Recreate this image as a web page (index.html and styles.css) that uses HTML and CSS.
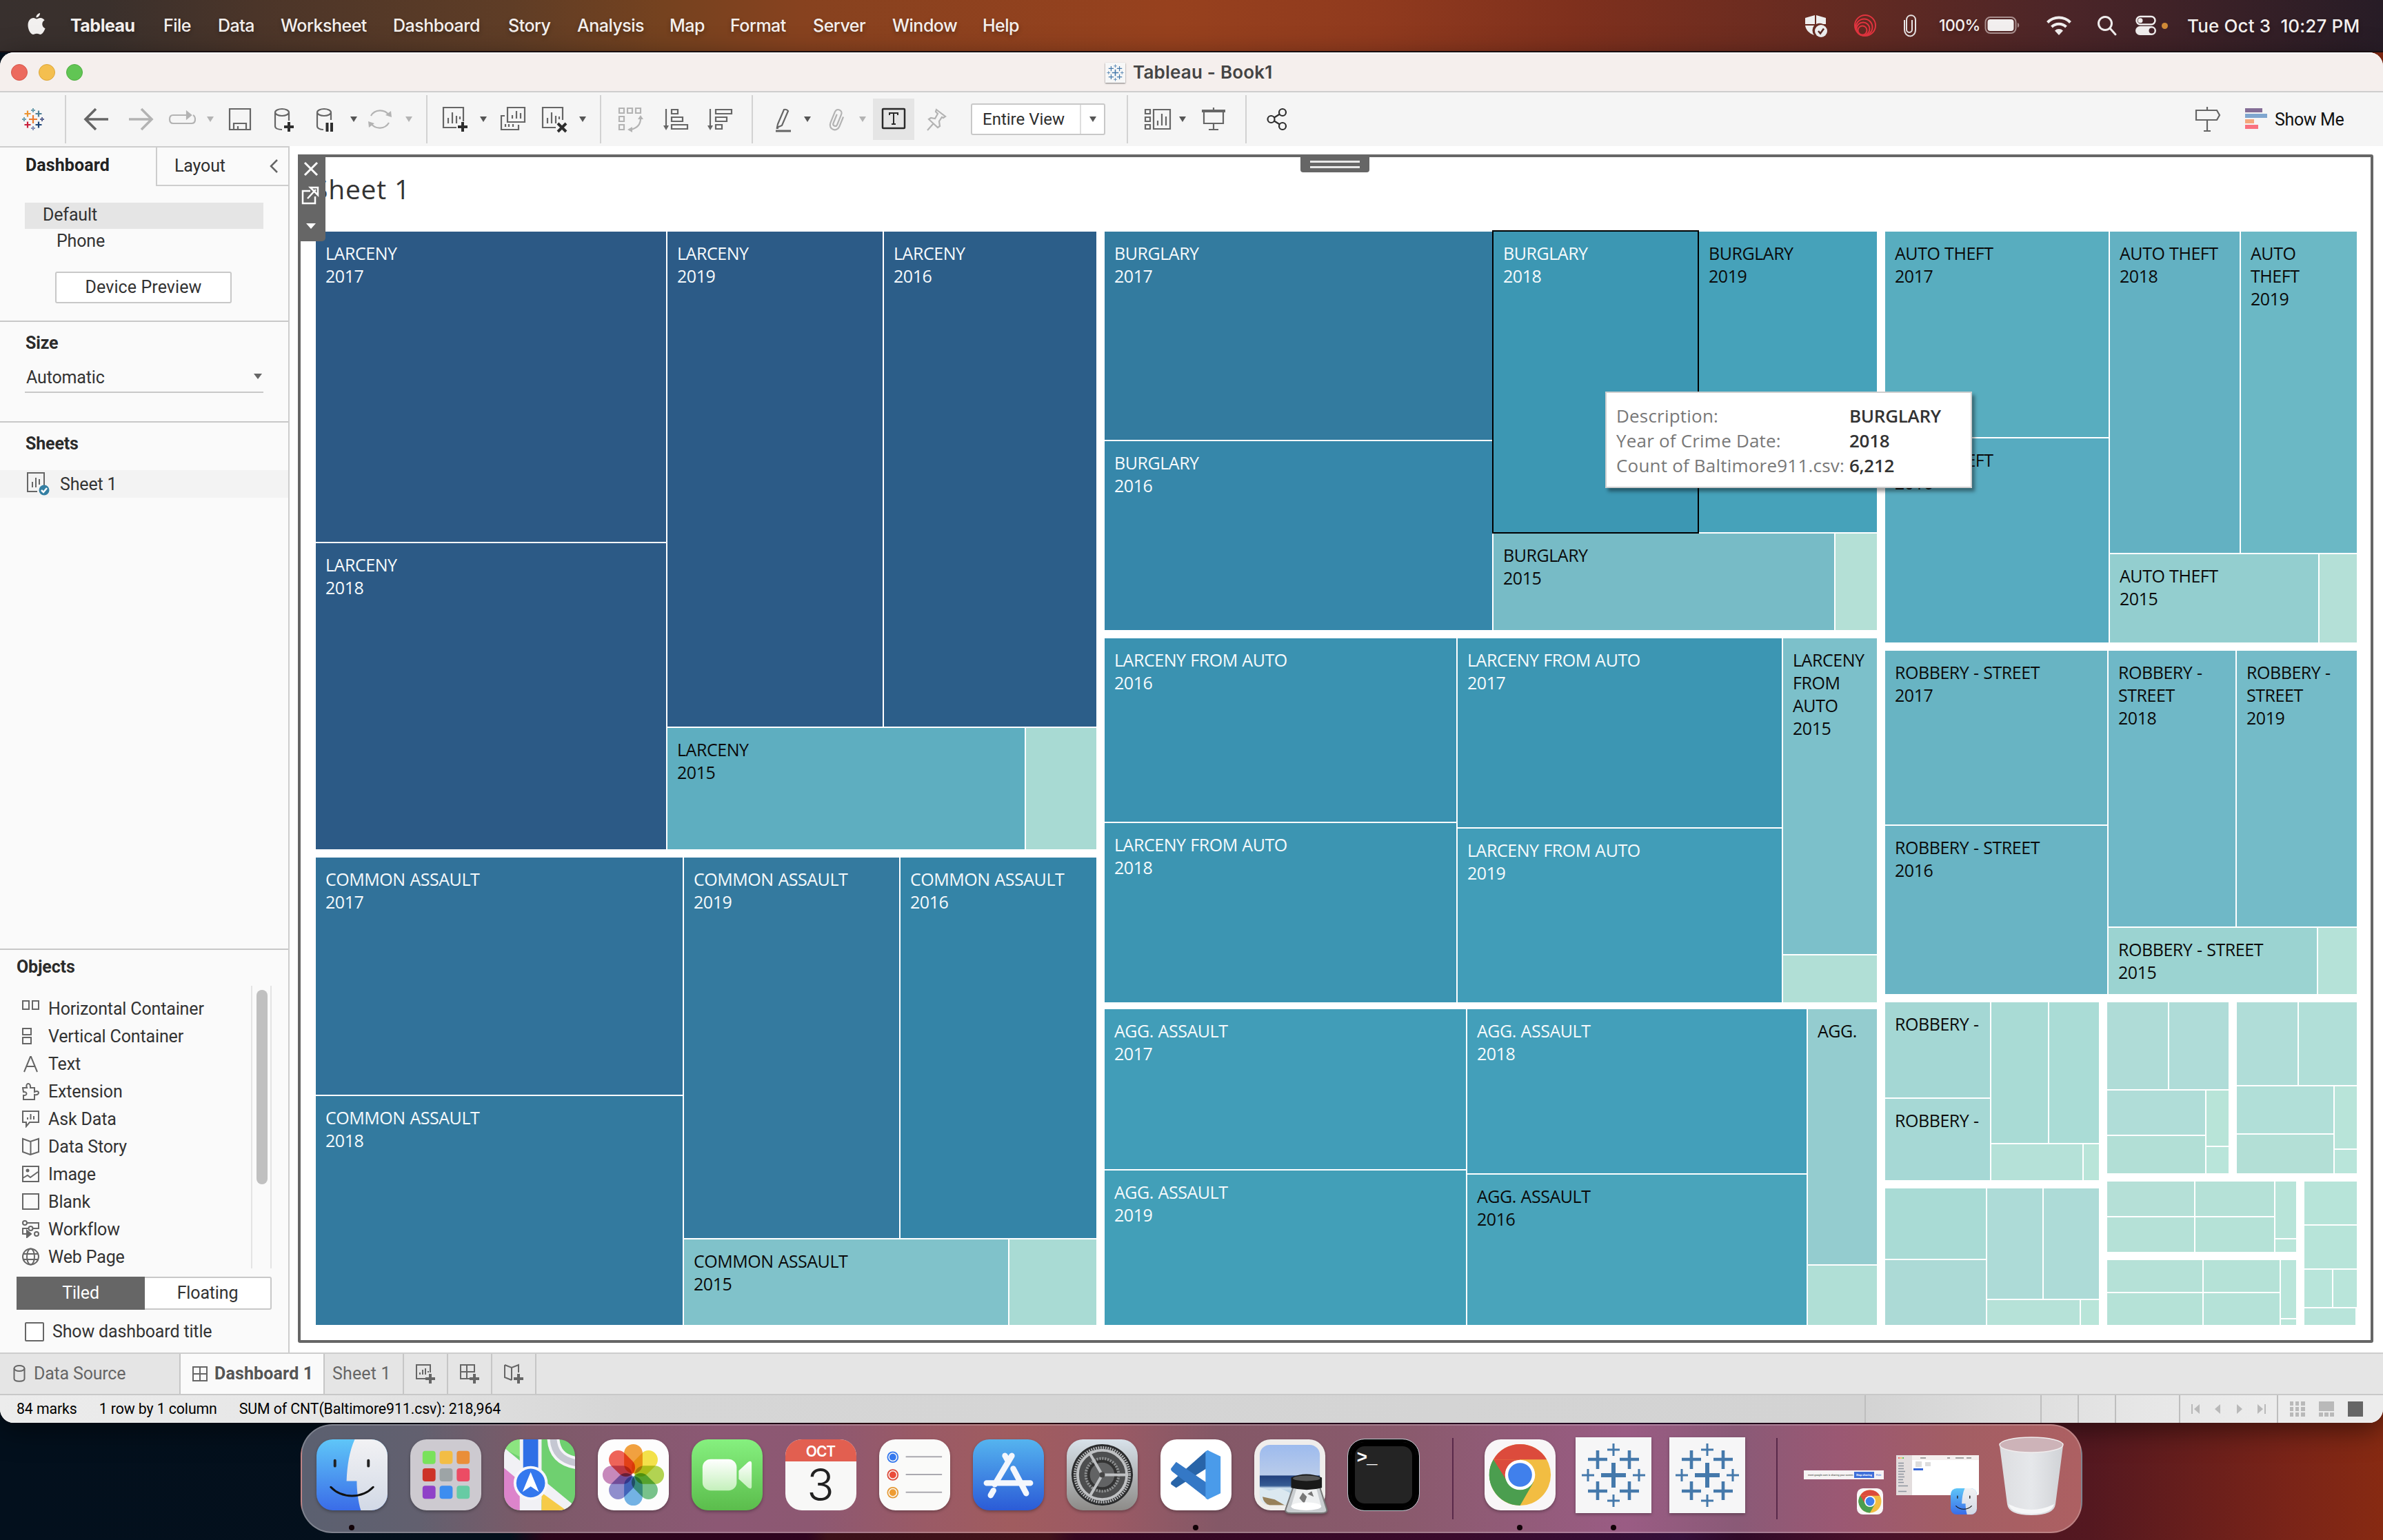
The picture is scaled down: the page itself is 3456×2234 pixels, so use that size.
FILE: index.html
```html
<!DOCTYPE html>
<html lang="en">
<head>
<meta charset="utf-8">
<title>Tableau - Book1</title>
<link rel="stylesheet" href="styles.css">
</head>
<body>
<svg class="defs" width="0" height="0">
  <defs>
    <linearGradient id="g-blue" x1="0" y1="0" x2="0" y2="1"><stop offset="0" stop-color="#55b4ef"/><stop offset="1" stop-color="#2b5bd7"/></linearGradient>
    <linearGradient id="g-face" x1="0" y1="0" x2="0" y2="1"><stop offset="0" stop-color="#5fc6f8"/><stop offset="1" stop-color="#3a6ce8"/></linearGradient>
    <linearGradient id="g-pale" x1="0" y1="0" x2="0" y2="1"><stop offset="0" stop-color="#f2f2f4"/><stop offset="1" stop-color="#d2d9e6"/></linearGradient>
    <linearGradient id="g-green" x1="0" y1="0" x2="0" y2="1"><stop offset="0" stop-color="#86f07f"/><stop offset="1" stop-color="#5bbd4c"/></linearGradient>
    <linearGradient id="g-cam" x1="0" y1="0" x2="0" y2="1"><stop offset="0" stop-color="#ffffff"/><stop offset="1" stop-color="#c4f0bb"/></linearGradient>
    <linearGradient id="g-gray" x1="0" y1="0" x2="0" y2="1"><stop offset="0" stop-color="#d8e2ea"/><stop offset="1" stop-color="#8d8b88"/></linearGradient>
    <linearGradient id="g-sky" x1="0" y1="0" x2="0" y2="1"><stop offset="0" stop-color="#9dbbee"/><stop offset=".5" stop-color="#b9cbea"/><stop offset=".52" stop-color="#23417e"/><stop offset=".68" stop-color="#355b93"/><stop offset=".72" stop-color="#cfe0ee"/><stop offset=".86" stop-color="#8fb7cf"/><stop offset="1" stop-color="#a88a5c"/></linearGradient>
    <linearGradient id="g-trash" x1="0" y1="0" x2="1" y2="0"><stop offset="0" stop-color="#dcdde0"/><stop offset=".5" stop-color="#e6e8eb"/><stop offset="1" stop-color="#d0d2d6"/></linearGradient>
    <clipPath id="tileclip"><rect width="104" height="104" rx="24"/></clipPath>
    <symbol id="caret" viewBox="0 0 12 10"><path d="M1 1h10L6 9z" fill="currentColor"/></symbol>
    <symbol id="finder" viewBox="0 0 104 104">
      <g clip-path="url(#tileclip)">
        <rect width="104" height="104" fill="url(#g-face)"/>
        <path d="M56 0C48 18 45 38 44 61h15c0 14 2 30 6 43h39V0z" fill="url(#g-pale)"/>
      </g>
      <path d="M27 31v8M76 31v8" stroke="#222" stroke-width="4" stroke-linecap="round"/>
      <path d="M21 70c16 17 46 17 62 0" fill="none" stroke="#111" stroke-width="3" stroke-linecap="round"/>
    </symbol>
    <symbol id="chrome" viewBox="0 0 104 104">
      <rect width="104" height="104" rx="24" fill="#f8f6f7"/>
      <circle cx="52" cy="52" r="45" fill="#f2bd42"/>
      <path d="M13 29.500A45 45 0 0 1 91 29.500H52z" fill="#dc4b3c"/>
      <path d="M13 29.500A45 45 0 0 0 52 97L71.500 63 52 52 32 63z" fill="#4b9e4f"/>
      <path d="M13 29.500 32 63 52 52V29.500H20z" fill="#dc4b3c"/>
      <path d="M13 29.500A45 45 0 0 0 10 68l24-5z" fill="#4b9e4f"/>
      <circle cx="52" cy="52" r="22" fill="#fff"/><circle cx="52" cy="52" r="17.500" fill="#4080ec"/>
    </symbol>
    <symbol id="tableau" viewBox="0 0 110 110">
      <g stroke="#4579ab" fill="none">
        <path d="M55 37v36M37 55h36" stroke-width="6"/>
        <path d="M32 19v27M18 32h28M78 19v27M64 32h28M32 64v27M18 78h28M78 64v27M64 78h28" stroke-width="4.600"/>
        <path d="M55 9v18M46 18h18M55 83v18M46 92h18M18 46v18M9 55h18M92 46v18M83 55h18" stroke-width="3"/>
      </g>
    </symbol>
  </defs>
</svg>

<header class="menubar">
  <nav class="menus">
    <svg class="apple" viewBox="0 0 28 34"><path d="M19 1c.3 3-2.500 6.500-5.500 6.500C13 4.500 16 1.500 19 1zM14 9.500c1.500 0 3-1.500 5.600-1.500 2.600 0 4.700 1.400 6 3.300-5 3-4 10 1 12C25 27 22.500 32 19.600 32c-2 0-2.700-1.200-5.200-1.200S11 32 9.200 32C5.500 32 1.500 25 1.500 18.500S5.500 8 9.500 8c2 0 3.400 1.500 4.500 1.500z" fill="#f2f0ef"/></svg>
    <b>Tableau</b><span>File</span><span>Data</span><span>Worksheet</span><span>Dashboard</span><span>Story</span><span>Analysis</span><span>Map</span><span>Format</span><span>Server</span><span>Window</span><span>Help</span>
  </nav>
  <div class="extras">
    <svg class="ic" viewBox="0 0 40 40"><path d="M19 5 5 9v9h14zM21 5l14 4v9h-4a11 11 0 0 0-10 0zM5 20h13a11 11 0 0 0 0 14C10 31 6 26 5 20z" fill="#eee"/><circle cx="28" cy="28" r="9" fill="#eee"/><path d="m24 28 3 3.500 5-7" fill="none" stroke="#5a2822" stroke-width="2.500"/></svg>
    <svg class="ic" viewBox="0 0 40 40" fill="none" stroke="#e2343f" stroke-width="2"><circle cx="20" cy="20" r="15"/><circle cx="18.500" cy="22.500" r="12"/><circle cx="17" cy="25" r="9.500"/><circle cx="16" cy="27" r="6.500"/></svg>
    <svg class="ic" viewBox="0 0 40 40" fill="none" stroke="#e8e4e4" stroke-width="2"><path d="M24 12v14a4 4 0 0 1-8 0V12c0-9 13-9 13 0v14c0 13-16 12-16 0V12" transform="translate(-1)"/></svg>
    <span class="pct">100%</span>
    <svg class="batt" viewBox="0 0 52 28"><rect x="1.500" y="2" width="44" height="23" rx="7" fill="none" stroke="#a98f8e" stroke-width="2"/><rect x="4.500" y="5" width="38" height="17" rx="4" fill="#f2efef"/><path d="M48 10c3 1 3 6 0 7z" fill="#a98f8e"/></svg>
    <svg class="ic" viewBox="0 0 40 40" fill="none" stroke="#f0eded" stroke-width="4"><path d="M3.500 15.500a23 23 0 0 1 33 0M9.500 22a15 15 0 0 1 21 0"/><path d="M20 34l-6-6.500a8.500 8.500 0 0 1 12 0z" fill="#f0eded" stroke="none"/></svg>
    <svg class="ic" viewBox="0 0 40 40" fill="none" stroke="#f0eded" stroke-width="3"><circle cx="18" cy="17" r="9.500"/><path d="m25 24 8 9" stroke-linecap="round"/></svg>
    <svg class="ic" viewBox="0 0 40 40"><rect x="6.500" y="7" width="27" height="11.500" rx="5.700" fill="none" stroke="#f0eded" stroke-width="2.500"/><circle cx="12" cy="12.700" r="3.500" fill="#f0eded"/><rect x="5" y="21" width="30" height="13" rx="6.500" fill="#f0eded"/><circle cx="28.500" cy="27.500" r="4" fill="#44232a"/></svg>
    <i class="recdot"></i>
    <span class="clock">Tue Oct 3&nbsp; 10:27 PM</span>
  </div>
</header>

<main class="window">
  <div class="titlebar">
    <div class="lights"><i class="red"></i><i class="yellow"></i><i class="green"></i></div>
    <div class="title"><svg class="doc" viewBox="0 0 110 110"><use href="#tableau"/></svg>Tableau - Book1</div>
  </div>

  <div class="toolbar">
    <svg class="ic" viewBox="0 0 40 40" fill="none" stroke-width="2.500"><path d="M20 14v12M14 20h12" stroke="#eb7a2e"/><path d="M12 7.500v9M7.500 12h9" stroke="#ec9330"/><path d="M28 7.500v9M23.500 12h9" stroke="#4c7f95"/><path d="M12 23.500v9M7.500 28h9" stroke="#c9203b"/><path d="M28 23.500v9M23.500 28h9" stroke="#1e4477"/><path d="M20 4v6M17 7h6" stroke="#6fa0b0" stroke-width="2"/><path d="M20 30v6M17 33h6" stroke="#8590b8" stroke-width="2"/><path d="M7 17v6M4 20h6" stroke="#6fa0b0" stroke-width="2"/><path d="M33 17v6M30 20h6" stroke="#5b6591" stroke-width="2"/></svg>
    <i class="sep"></i>
    <svg class="ic" viewBox="0 0 40 40" fill="none" stroke-width="3"><path d="M37 20H5M19 5 4 20l15 15"/></svg>
    <svg class="ic dim" viewBox="0 0 40 40" fill="none" stroke-width="3"><path d="M3 20h32M21 5l15 15-15 15"/></svg>
    <svg class="ic dim" viewBox="0 0 40 40" fill="none"><path d="M26 14H7q-5 0-5 6t5 6h27q5 0 5-6c0-4-1-5-3-6"/><path d="m27 9 6 5-6 5z" fill="currentColor"/></svg>
    <svg class="caret dim"><use href="#caret"/></svg>
    <svg class="ic" viewBox="0 0 40 40" fill="none"><path d="M5 5h30v30H5zM11 35V26h18v9M17 35v-5"/></svg>
    <svg class="ic" viewBox="0 0 40 40" fill="none"><ellipse cx="17" cy="10" rx="10" ry="5"/><path d="M7 10v20c0 3 4 5 10 5M27 10v12"/><path d="M27 24v14M20 31h14" class="bold"/></svg>
    <svg class="ic" viewBox="0 0 40 40" fill="none"><ellipse cx="18" cy="10" rx="10" ry="5"/><path d="M8 10v20c0 3 4 5 9 5M28 10v11"/><path d="M22.500 25v13M29 25v13" class="bold"/></svg>
    <svg class="caret"><use href="#caret"/></svg>
    <svg class="ic dim" viewBox="0 0 40 40" fill="none"><path d="M7 15A15 14 0 0 1 33 14M33 25A15 14 0 0 1 7 26"/><path d="m28 14 9 3-1-9zM12 26l-9-3 1 9z" fill="currentColor" stroke="none"/></svg>
    <svg class="caret dim"><use href="#caret"/></svg>
    <i class="sep"></i>
    <svg class="ic" viewBox="0 0 40 40" fill="none"><path d="M22 32H3V3h29v20M10 26v-8M16 26V10M22 26V15M27 20v-4"/><path d="M31 24v14M24 31h14" class="bold"/></svg>
    <svg class="caret"><use href="#caret"/></svg>
    <svg class="ic" viewBox="0 0 40 40" fill="none"><path d="M12 3h25v21H12zM19 19v-5M25 19V8M31 19v-8M8 15H3v20h25v-7M9 31v-4M14 31v-4M20 31v-4"/></svg>
    <svg class="ic" viewBox="0 0 40 40" fill="none"><path d="M22 32H3V3h29v18M10 26v-8M16 26V10M22 26V15M27 20v-4"/><path d="m25 26 12 12M37 26 25 38" class="bold"/></svg>
    <svg class="caret"><use href="#caret"/></svg>
    <i class="sep"></i>
    <svg class="ic dim" viewBox="0 0 40 40" fill="none"><path d="M3 4h7v7H3zM15 4h7v7h-7zM27 4h7v7h-7zM3 16h7v7H3zM3 28h7v7H3zM34 19c0 9-6 14-14 16"/><path d="m30 20 4-6 4 6zM22 31l-7 4 7 4z" fill="currentColor" stroke="none"/></svg>
    <svg class="ic" viewBox="0 0 40 40" fill="none"><path d="M6 5v26M14 6h9v6h-9zM14 17h16v6H14zM14 28h23v6H14z"/><path d="m2 29 4 7 4-7z" fill="currentColor" stroke="none"/></svg>
    <svg class="ic" viewBox="0 0 40 40" fill="none"><path d="M6 5v26M14 6h23v6H14zM14 17h16v6H14zM14 28h9v6h-9z"/><path d="m2 29 4 7 4-7z" fill="currentColor" stroke="none"/></svg>
    <i class="sep"></i>
    <svg class="ic" viewBox="0 0 40 40" fill="none"><path d="m12 27 9-21q4-1 6 2l-9 21-7 3zM10 33h3"/><path d="M9 37h22" stroke-width="3"/></svg>
    <svg class="caret"><use href="#caret"/></svg>
    <svg class="ic dim" viewBox="0 0 40 40" fill="none"><path d="M18 13v14a3 3 0 0 0 6 0V11c0-7-10-7-10 0v17c0 10 14 10 14 0V13" transform="rotate(22 20 20)"/></svg>
    <svg class="caret dim"><use href="#caret"/></svg>
    <span class="tbtn"><svg viewBox="0 0 40 40" fill="none" stroke="#2a2a2a" stroke-width="2.500"><rect x="4" y="5" width="32" height="28" rx="1"/><path d="M14 14v-3h12v3M20 11v16M17 27h6" stroke-width="2"/></svg></span>
    <svg class="ic dim" viewBox="0 0 40 40" fill="none"><path d="m19 6 13 10-3 2-2-1-4 6 1 7-3 2L8 20l3-2 6 1 4-7-3-3zM14 27l-8 9"/></svg>
    <span class="select"><span>Entire View</span><i><svg class="caret"><use href="#caret"/></svg></i></span>
    <i class="sep"></i>
    <svg class="ic" viewBox="0 0 40 40" fill="none"><path d="M2 6h7v6H2zM2 17h7v6H2zM2 28h7v6H2zM14 6h24v28H14zM20 29v-7M26 29V12M32 29V16"/></svg>
    <svg class="caret"><use href="#caret"/></svg>
    <svg class="ic" viewBox="0 0 40 40" fill="none"><path d="M20 3v3M6 8v18h28V8M20 26v9M13 35h14"/><path d="M3 8h34" stroke-width="4"/></svg>
    <i class="sep"></i>
    <svg class="ic ink" viewBox="0 0 40 40" fill="none"><circle cx="11.500" cy="20" r="5"/><circle cx="28" cy="10" r="5"/><circle cx="28" cy="30" r="5"/><path d="m16 17.500 8-5M16 22.500l8 5"/></svg>
    <svg class="ic" viewBox="0 0 40 40" fill="none"><path d="M19 2v4M3 7h30l4 7-4 7H3zM19 21v15M14 37h10"/></svg>
    <span class="showme"><svg viewBox="0 0 34 32"><path d="M0 0h25v6H0z" fill="#846d96"/><path d="M0 8h32v6H0z" fill="#7fa6cf"/><path d="M0 16h13v6H0z" fill="#f5a77c"/><path d="M0 24h19v6H0z" fill="#f9717f"/></svg>Show Me</span>
  </div>

  <div class="work">
    <aside class="side">
      <div class="tabs">
        <b>Dashboard</b>
        <span>Layout<svg viewBox="0 0 14 22"><path d="M12 2 3 11l9 9" fill="none" stroke="#666" stroke-width="2.500"/></svg></span>
      </div>
      <div class="devices">
        <div class="dev on">Default</div>
        <div class="dev phone">Phone</div>
        <div class="preview">Device Preview</div>
      </div>
      <section class="size">
        <h2>Size</h2>
        <div class="auto">Automatic<svg viewBox="0 0 12 10"><path d="M0 0h12L6 8z" fill="#666"/></svg></div>
      </section>
      <section class="sheets">
        <h2>Sheets</h2>
        <div class="sheetrow">
          <svg viewBox="0 0 34 34"><path d="M15 28H1V1h24v18M8 22v-8M13 22V8M18 18v-8" fill="none" stroke="#666" stroke-width="2"/><circle cx="25" cy="26" r="7.500" fill="#347fa3"/><path d="m21 26 3 3 5-6" fill="none" stroke="#fff" stroke-width="2.500"/></svg>
          Sheet 1
        </div>
      </section>
      <section class="objects">
        <h2>Objects</h2>
        <div class="objwrap">
          <ul>
            <li><svg viewBox="0 0 26 26"><path d="M1 2h9v12H1zM15 2h9v12h-9z"/></svg>Horizontal Container</li>
            <li><svg viewBox="0 0 26 26"><path d="M1 2h12v9H1zM1 15h12v9H1z"/></svg>Vertical Container</li>
            <li><svg viewBox="0 0 26 26"><path d="m3 25 9-22h1l9 22M6 17h13"/></svg>Text</li>
            <li><svg viewBox="0 0 26 26"><path d="M1 8h6C4 1 13-1 12 8h6v6c8-4 8 6 0 4v7H2v-6c6 1 6-6 0-5z"/></svg>Extension</li>
            <li><svg viewBox="0 0 26 26"><path d="M1 2h23v16H11l-5 6v-6H1zM8 14v-3M12.500 14V6M17 14V9"/></svg>Ask Data</li>
            <li><svg viewBox="0 0 26 26"><path d="m1 2 11 4 12-4v19l-12 4-11-4zM12.500 6v18"/></svg>Data Story</li>
            <li><svg viewBox="0 0 26 26"><path d="M1 2h23v22H1zM1 19l7-4 4 3 11-8"/><circle cx="8" cy="8" r="1.500" fill="#666"/></svg>Image</li>
            <li><svg viewBox="0 0 26 26"><path d="M1 2h23v22H1z"/></svg>Blank</li>
            <li><svg viewBox="0 0 26 26"><circle cx="4" cy="4" r="3"/><circle cx="12.500" cy="12" r="3"/><circle cx="21" cy="20" r="3"/><path d="M7 4h17v8h-8M9 12H1v8h8"/><path d="m7 15 6 5-6 5z" fill="#666"/></svg>Workflow</li>
            <li><svg viewBox="0 0 26 26"><circle cx="12.500" cy="13" r="11.500"/><ellipse cx="12.500" cy="13" rx="5.500" ry="11.500"/><path d="M2 9h21M2 17h21"/></svg>Web Page</li>
          </ul>
          <div class="track"><i></i></div>
        </div>
        <div class="toggle"><span class="on">Tiled</span><span>Floating</span></div>
        <div class="check"><i></i>Show dashboard title</div>
      </section>
    </aside>

    <div class="canvas">
      <div class="frame">
        <div class="sheet-title">Sheet 1</div>
        <div class="treemap" id="treemap"></div>
        <div class="objbar">
          <svg viewBox="0 0 40 126" fill="none" stroke="#fff" stroke-width="3"><path d="m10 12 18 18M28 12 10 30"/><path d="M18 53H7v18h18V61" stroke-width="2.500"/><path d="m14 64 12-13M18 48h11v11z" stroke-width="2.500"/><path d="M12 100h14l-7 8z" fill="#fff" stroke="none"/></svg>
        </div>
        <div class="grip"><i></i><i></i></div>
        <div class="tooltip">
          <span>Description:</span><b>BURGLARY</b>
          <span>Year of Crime Date:</span><b>2018</b>
          <span>Count of Baltimore911.csv:</span><b>6,212</b>
        </div>
      </div>
    </div>
  </div>

  <div class="sheettabs">
    <span class="source"><svg viewBox="0 0 18 26"><ellipse cx="9" cy="5" rx="7.500" ry="4"/><path d="M1.500 5v15c0 5 15 5 15 0V5"/></svg>Data Source</span>
    <span class="active"><svg viewBox="0 0 24 24"><path d="M2 2h20v20H2zM12 2v20M2 12h20"/></svg>Dashboard 1</span>
    <span class="plain">Sheet 1</span>
    <span class="add"><svg viewBox="0 0 30 30"><path d="M15 22H2V2h20v11M7 16v-3M11 16V9M15 16V7M19 13v-2"/><path d="M22 15v14M15 22h14" stroke-width="4"/></svg></span>
    <span class="add"><svg viewBox="0 0 30 30"><path d="M15 22H2V2h20v11M11 2v20M2 12h20"/><path d="M22 15v14M15 22h14" stroke-width="4"/></svg></span>
    <span class="add"><svg viewBox="0 0 30 30"><path d="m2 2 10 4 10-4v11M2 2v18l10 4M12 6v18"/><path d="M22 15v14M15 22h14" stroke-width="4"/></svg></span>
  </div>

  <div class="status">
    <span>84 marks</span><span>1 row by 1 column</span><span>SUM of CNT(Baltimore911.csv): 218,964</span>
    <div class="cells">
      <i></i><i></i><i></i><i></i>
      <div class="nav">
        <svg viewBox="0 0 112 16" fill="#b9b9b9"><path d="M0 1h2v14H0zM12 1v14L4 8zM42 1v14l-8-7zM66 1v14l8-7zM96 1v14l8-7zM106 1h2v14h-2z"/></svg>
      </div>
      <div class="views">
        <svg viewBox="0 0 108 24"><path d="M0 1h5v6H0zM8 1h5v6H8zM16 1h6v6h-6zM0 9h5v6H0zM8 9h5v6H8zM16 9h6v6h-6zM0 17h5v6H0zM8 17h5v6H8zM16 17h6v6h-6zM42 1h22v14H42zM42 17h6v6h-6zM50 17h6v6h-6zM58 17h6v6h-6z" fill="#b9b9b9"/><path d="M84 1h22v22H84z" fill="#666"/></svg>
      </div>
    </div>
  </div>
</main>

<footer class="dock">
  <div class="app run"><svg class="app-ic" viewBox="0 0 104 104"><use href="#finder"/></svg></div>
  <div class="app"><svg class="app-ic" viewBox="0 0 104 104"><rect width="104" height="104" rx="24" fill="#cdcad0"/><rect x="18" y="17" width="19" height="19" rx="4" fill="#79e25b"/><rect x="43" y="17" width="19" height="19" rx="4" fill="#f3bd44"/><rect x="68" y="17" width="19" height="19" rx="4" fill="#ea8e38"/><rect x="18" y="42.500" width="19" height="19" rx="4" fill="#cd3327"/><rect x="43" y="42.500" width="19" height="19" rx="4" fill="#9da4a6"/><rect x="68" y="42.500" width="19" height="19" rx="4" fill="#ec4c64"/><rect x="18" y="68" width="19" height="19" rx="4" fill="#8f41c8"/><rect x="43" y="68" width="19" height="19" rx="4" fill="#3d8df0"/><rect x="68" y="68" width="19" height="19" rx="4" fill="#66cba4"/></svg></div>
  <div class="app"><svg class="app-ic" viewBox="0 0 104 104"><g clip-path="url(#tileclip)"><rect width="104" height="104" fill="#6fd070"/><path d="M0 0h24v26L0 14z" fill="#8ce480"/><path d="M0 14v90h26V38z" fill="#dc84cb"/><path d="M0 12 104 98v6H74L0 42z" fill="#f1f1f5"/><path d="M23 0h32v104H23z" fill="#f1f1f5"/><path d="M28 0h22v58H28z" fill="#2f6fe6"/><path d="M55 78l36 26H55z" fill="#f6cb47"/><path d="M72-5c0 22 10 36 36 40" fill="none" stroke="#f4f4f8" stroke-width="18"/><path d="M72-5c0 22 10 36 36 40" fill="none" stroke="#c5c7d2" stroke-width="10"/></g><circle cx="39" cy="64" r="25" fill="#f7f7fa"/><circle cx="39" cy="64" r="21" fill="#3478ee"/><path d="m39 48 12 29-12-8-12 8z" fill="#fff"/></svg></div>
  <div class="app"><svg class="app-ic" viewBox="0 0 104 104"><rect width="104" height="104" rx="24" fill="#fdfdfd"/><g class="petals"><rect x="38.500" y="7" width="27" height="43" rx="13.500" fill="#f3a240"/><rect x="38.500" y="7" width="27" height="43" rx="13.500" fill="#f5e34a" transform="rotate(45 52 52)"/><rect x="38.500" y="7" width="27" height="43" rx="13.500" fill="#b4d552" transform="rotate(90 52 52)"/><rect x="38.500" y="7" width="27" height="43" rx="13.500" fill="#79c48b" transform="rotate(135 52 52)"/><rect x="38.500" y="7" width="27" height="43" rx="13.500" fill="#74b4e6" transform="rotate(180 52 52)"/><rect x="38.500" y="7" width="27" height="43" rx="13.500" fill="#908fcf" transform="rotate(225 52 52)"/><rect x="38.500" y="7" width="27" height="43" rx="13.500" fill="#c98abd" transform="rotate(270 52 52)"/><rect x="38.500" y="7" width="27" height="43" rx="13.500" fill="#f0655a" transform="rotate(315 52 52)"/></g></svg></div>
  <div class="app"><svg class="app-ic" viewBox="0 0 104 104"><rect width="104" height="104" rx="24" fill="url(#g-green)"/><rect x="16" y="29" width="50" height="46" rx="12" fill="url(#g-cam)"/><path d="M69 46l14-13q5-3 5 3v33q0 5-5 2L69 58z" fill="url(#g-cam)"/></svg></div>
  <div class="app"><div class="cal"><span>OCT</span><b>3</b></div></div>
  <div class="app"><svg class="app-ic" viewBox="0 0 104 104"><rect width="104" height="104" rx="24" fill="#fafaf9"/><path d="M39 25.500h53M39 51.500h53M39 77.500h53" stroke="#aaa9b0" stroke-width="2"/><g fill="none" stroke-width="1.800"><circle cx="20" cy="26" r="7.500" stroke="#3478ee"/><circle cx="20" cy="52" r="7.500" stroke="#dc4a3a"/><circle cx="20" cy="78" r="7.500" stroke="#e49a37"/></g><circle cx="20" cy="26" r="5" fill="#3478ee"/><circle cx="20" cy="52" r="5" fill="#ea4b3b"/><circle cx="20" cy="78" r="5" fill="#ee9c33"/></svg></div>
  <div class="app"><svg class="app-ic" viewBox="0 0 104 104"><rect width="104" height="104" rx="24" fill="url(#g-blue)"/><g stroke="#f4f7fd" stroke-width="8.500" stroke-linecap="round"><path d="M57 24 32 66M47 24l4 7M59 43l19 36M20 64h64M30 75l-4 7"/></g></svg></div>
  <div class="app"><svg class="app-ic" viewBox="0 0 104 104"><rect width="104" height="104" rx="24" fill="url(#g-gray)"/><circle cx="52" cy="52" r="45" fill="#2b2c2d"/><circle cx="52" cy="52" r="40" fill="none" stroke="#b4b6b8" stroke-width="4" stroke-dasharray="2 1.500"/><circle cx="52" cy="52" r="36" fill="#4d4e4f" stroke="#bfc1c3" stroke-width="4"/><circle cx="52" cy="52" r="24" fill="#333" stroke="#8d8f90" stroke-width="4" stroke-dasharray="2.500 1.500"/><circle cx="52" cy="52" r="18" fill="#626364"/><path d="M52 52h36M52 52 34 21M52 52 34 83" stroke="#bfc1c3" stroke-width="4"/><circle cx="52" cy="52" r="4" fill="#444"/></svg></div>
  <div class="app run"><svg class="app-ic" viewBox="0 0 104 104"><rect width="104" height="104" rx="24" fill="#fff"/><path d="M16 62 66 18l4-2v25L23 71l-6-4q-3-2-1-5z" fill="#2864a8"/><path d="M16 42l7-9 47 32v23L17 47q-3-3-1-5z" fill="#3478c6"/><path d="M69 16 88 25v54l-19 9-3-2V18z" fill="#4a9bea"/></svg></div>
  <div class="app"><svg class="app-ic tall" viewBox="0 0 112 112"><rect width="104" height="104" rx="24" fill="#efedeb"/><rect x="8" y="8" width="88" height="88" rx="15" fill="url(#g-sky)"/><path d="M8 70l14 5 16-3 14 6v18H22Q8 94 8 82z" fill="#dbe8f0"/><path d="M12 84l18 4 14 8H22q-8-2-10-12z" fill="#97805a"/><path d="M57 70 46 102q-2 6 8 6h44q10 0 8-6L96 70z" fill="#c9cdd0" stroke="#777" stroke-width="2"/><path d="M62 72 54 98h44L91 72z" fill="#eef0f1"/><path d="m66 86 5-8 6 6-4 10zM78 80l6-4 3 8z" fill="#777"/><ellipse cx="76" cy="98" rx="22" ry="6" fill="#fff"/><path d="M54 56q22-10 45 0v15q-22 6-45 0z" fill="#191919"/><ellipse cx="76.500" cy="57" rx="20" ry="4" fill="#555"/></svg></div>
  <div class="app"><div class="term"><b>&gt;_</b></div></div>
  <div class="split"></div>
  <div class="app run"><svg class="app-ic" viewBox="0 0 104 104"><use href="#chrome"/></svg></div>
  <div class="app run"><svg class="app-ic square" viewBox="0 0 110 110"><use href="#tableau"/></svg></div>
  <div class="app"><svg class="app-ic square" viewBox="0 0 110 110"><use href="#tableau"/></svg></div>
  <div class="split"></div>
  <div class="app mini">
    <div class="share"><span>meet.google.com is sharing your screen.</span><b>Stop sharing</b><em>Hide</em></div>
    <svg class="badge" viewBox="0 0 104 104"><use href="#chrome"/></svg>
  </div>
  <div class="app mini">
    <svg class="files" viewBox="0 0 120 58"><rect width="120" height="58" rx="2" fill="#fff"/><path d="M0 0h23v58H0z" fill="#e3dddd"/><path d="M23 0h97v7H23z" fill="#f5f0ef"/><path d="M3 4h2" stroke="#ee6a5f" stroke-width="2"/><path d="M6 4h2" stroke="#f5bf4f" stroke-width="2"/><path d="M9 4h2" stroke="#61c554" stroke-width="2"/><path d="M3 11.500h8M3 15.500h8M3 19.500h8M3 23.500h10M3 27.500h8M3 31.500h9M3 35.500h7M3 39.500h8M3 44.500h14M3 52.500h12" stroke="#8d949e" stroke-width="1.400"/><path d="M35 4h8M74 4h4M86 4h12M102 4h7" stroke="#888" stroke-width="1.500"/><path d="M28 9h9v8h-9zM42 10h8v6h-8z" fill="#ddd"/><path d="M25 19h14v3H25z" fill="#3566d8"/></svg>
    <svg class="badge" viewBox="0 0 104 104"><use href="#finder"/></svg>
  </div>
  <div class="app"><svg class="trash" viewBox="0 0 94 114"><path d="M1 13 12 98q2 16 35 16t35-16L93 13z" fill="url(#g-trash)"/><path d="M14 98q33 16 66 0-3 14-33 14T14 98z" fill="#f6f7f8"/><ellipse cx="47" cy="12" rx="46" ry="11" fill="#cdb3b8" stroke="#f0eced" stroke-width="1.500"/></svg></div>
</footer>
<script src="treemap.js"></script>
</body>
</html>
```

FILE: treemap.js
```js
// Nested treemap layout. The first argument of every node is its size
// along the parent's axis; 0 means "take what is left".
const node = (dir) => (size, gap, ...kids) => ({ dir, size, gap, kids });
const row = node('row');
const col = node('column');
const dark = (size, color, ...lines) => ({ size, color, lines, ink: 'on-light' });
const lite = (size, color, ...lines) => ({ size, color, lines, ink: 'on-dark' });
const picked = (...args) => ({ ...lite(...args), selected: true });

const tree = row(0, 12,
  col(1132, 12,
    row(896, 2,
      col(508, 2,
        lite(450, '#2c5985', 'LARCENY', '2017'),
        lite(0, '#2c5a86', 'LARCENY', '2018')),
      col(0, 2,
        row(718, 2,
          lite(312, '#2c5b87', 'LARCENY', '2019'),
          lite(0, '#2c5e89', 'LARCENY', '2016')),
        row(0, 2,
          dark(518, '#5eaec0', 'LARCENY', '2015'),
          dark(0, '#a8dad3')))),
    row(0, 2,
      col(532, 2,
        lite(344, '#31729a', 'COMMON ASSAULT', '2017'),
        lite(0, '#337a9f', 'COMMON ASSAULT', '2018')),
      col(0, 2,
        row(552, 2,
          lite(312, '#347a9f', 'COMMON ASSAULT', '2019'),
          lite(0, '#3484a7', 'COMMON ASSAULT', '2016')),
        row(0, 2,
          dark(470, '#80c2ca', 'COMMON ASSAULT', '2015'),
          dark(0, '#a9dbd4'))))),
  col(1120, 12,
    row(578, 2,
      col(562, 2,
        lite(302, '#337b9f', 'BURGLARY', '2017'),
        lite(0, '#3687aa', 'BURGLARY', '2016')),
      col(0, 2,
        row(436, 2,
          picked(296, '#3c97b3', 'BURGLARY', '2018'),
          dark(0, '#46a2ba', 'BURGLARY', '2019')),
        row(0, 2,
          dark(494, '#77bbc6', 'BURGLARY', '2015'),
          dark(0, '#b4e0d6')))),
    col(0, 10,
      row(528, 2,
        col(510, 2,
          lite(266, '#3a92b1', 'LARCENY FROM AUTO', '2016'),
          lite(0, '#3c95b2', 'LARCENY FROM AUTO', '2018')),
        col(470, 2,
          lite(274, '#3c96b3', 'LARCENY FROM AUTO', '2017'),
          lite(0, '#419db8', 'LARCENY FROM AUTO', '2019')),
        col(0, 2,
          dark(458, '#7cc0ca', 'LARCENY', 'FROM', 'AUTO', '2015'),
          dark(0, '#b1dfd6'))),
      row(0, 2,
        col(524, 2,
          lite(232, '#419db8', 'AGG. ASSAULT', '2017'),
          lite(0, '#429fb8', 'AGG. ASSAULT', '2019')),
        col(492, 2,
          lite(238, '#439fba', 'AGG. ASSAULT', '2018'),
          dark(0, '#49a4bb', 'AGG. ASSAULT', '2016')),
        col(0, 2,
          dark(370, '#94cccf', 'AGG.'),
          dark(0, '#b0dfd6'))))),
  col(0, 12,
    row(596, 2,
      col(324, 2,
        dark(298, '#58adbf', 'AUTO THEFT', '2017'),
        dark(0, '#57abc0', 'AUTO THEFT', '2016')),
      col(0, 2,
        row(466, 2,
          dark(188, '#63b1c2', 'AUTO THEFT', '2018'),
          dark(0, '#6bb8c5', 'AUTO', 'THEFT', '2019')),
        row(0, 2,
          dark(302, '#93cecf', 'AUTO THEFT', '2015'),
          dark(0, '#b4e0d7')))),
    row(498, 2,
      col(322, 2,
        dark(252, '#68b4c3', 'ROBBERY - STREET', '2017'),
        dark(0, '#69b4c4', 'ROBBERY - STREET', '2016')),
      col(0, 2,
        row(400, 2,
          dark(184, '#6fb8c7', 'ROBBERY -', 'STREET', '2018'),
          dark(0, '#74bbc8', 'ROBBERY -', 'STREET', '2019')),
        row(0, 2,
          dark(302, '#9bd3d1', 'ROBBERY - STREET', '2015'),
          dark(0, '#b5e2d8')))),
    row(0, 12,
      col(310, 12,
        row(258, 2,
          col(152, 2,
            dark(138, '#a4d7d4', 'ROBBERY -'),
            dark(0, '#a6d8d5', 'ROBBERY -')),
          col(0, 2,
            row(204, 2, dark(82, '#a9dbd5'), dark(0, '#aadcd6')),
            row(0, 2, dark(132, '#b5e1d8'), dark(0, '#b9e5d9')))),
        row(0, 2,
          col(146, 2, dark(102, '#a9dbd5'), dark(0, '#acdad6')),
          col(0, 2,
            row(160, 2, dark(80, '#addbd7'), dark(0, '#addbd7')),
            row(0, 2, dark(134, '#b6e2d8'), dark(0, '#b9e5d9'))))),
      col(0, 12,
        row(248, 12,
          col(176, 2,
            row(126, 2, dark(88, '#afdcd7'), dark(0, '#afdcd8')),
            row(0, 2,
              col(142, 2, dark(64, '#b0ddd8'), dark(0, '#b2dfd6')),
              col(0, 2, dark(80, '#b8e4d8'), dark(0, '#b9e5da')))),
          col(0, 2,
            row(120, 2, dark(88, '#b0ddd8'), dark(0, '#b1dfd8')),
            row(0, 2,
              col(140, 2, dark(68, '#b1dfd8'), dark(0, '#b3dfd6')),
              col(0, 2, dark(90, '#b8e4d9'), dark(0, '#b9e5da'))))),
        row(0, 12,
          col(274, 12,
            row(102, 2,
              col(126, 2, dark(50, '#b5e0d7'), dark(0, '#b5e1d7')),
              col(114, 2, dark(50, '#b5e1d7'), dark(0, '#b5e2d7')),
              col(0, 2, dark(82, '#b8e4d9'), dark(0, '#bae6da'))),
            row(0, 2,
              col(138, 2, dark(46, '#b5e1d7'), dark(0, '#b5e2d7')),
              col(110, 2, dark(46, '#b5e2d7'), dark(0, '#b5e2d8')),
              col(0, 2, dark(84, '#b9e5da'), dark(0, '#bae6da')))),
          col(0, 2,
            dark(62, '#b7e4d9'),
            dark(62, '#b7e4d9'),
            row(54, 2, dark(40, '#b8e5da'), dark(0, '#b9e5da')),
            row(0, 2, dark(74, '#b8e4da'))))))));

function build(item) {
  const el = document.createElement('div');
  el.style.flex = item.size ? `0 0 ${item.size}px` : '1 1 0';
  if (item.kids) {
    el.className = 'branch';
    el.style.flexDirection = item.dir;
    el.style.gap = `${item.gap}px`;
    item.kids.forEach((kid) => el.append(build(kid)));
  } else {
    const classes = ['tile', item.ink];
    if (item.lines.length) classes.push('labelled');
    if (item.selected) classes.push('selected');
    el.className = classes.join(' ');
    el.style.backgroundColor = item.color;
    item.lines.forEach((text) => {
      const line = document.createElement('div');
      line.textContent = text;
      el.append(line);
    });
  }
  return el;
}

document.getElementById('treemap').append(build(tree));
```

FILE: styles.css
```css
* { box-sizing: border-box; }
body {
  margin: 0; width: 3456px; height: 2234px; overflow: hidden;
  display: flex; flex-direction: column;
  font-family: Roboto, "Liberation Sans", sans-serif; font-size: 25px; color: #333;
  background: linear-gradient(90deg, #03101d 0, #04101c 740px, #2a0419 790px, #2f0420 1170px, #3c1119 1200px, #42131b 1520px, #330620 1560px, #3a0a2c 2100px, #35103a 2440px, #300a28 2520px, #48102a 2700px, #541820 3030px, #7a2418 3320px, #872a12 3456px);
}
svg { display: block; }
i, em { font-style: normal; }
h2 { margin: 0; font-size: 25px; line-height: 30px; font-weight: 700; color: #2b2b2b; }
.defs { position: absolute; }

/* menu bar */
.menubar {
  flex: 0 0 76px; height: 76px; display: flex; justify-content: space-between; align-items: center;
  border-bottom: 2px solid #1c1114; color: #f4f0ee;
  font-family: Inter, "Liberation Sans", sans-serif; font-weight: 500; font-size: 25px; letter-spacing: -.5px; white-space: nowrap;
  text-shadow: 0 3px 6px rgba(0,0,0,.3);
  background: linear-gradient(90deg, #38302e 0, #3a302c 150px, #4b3529 370px, #5f3d26 740px, #75421f 960px, #87421f 1160px, #97411e 1700px, #903a1e 2000px, #7f301d 2280px, #622a22 2700px, #4b2528 3000px, #271c26 3456px);
}
.menus { display: grid; grid-template-columns: 63px 135px 79px 91px 163px 167px 100px 134px 88px 120px 115px 131px 100px; align-items: center; padding-left: 39px; }
.apple { width: 28px; height: 34px; margin-top: -4px; }
.menus b { font-weight: 700; }
.extras { display: grid; grid-template-columns: 72px 65px 62px 66px 88px 69px 57px 43px 37px 284px; align-items: center; }
.ic { width: 40px; height: 40px; }
.pct { font-size: 23px; letter-spacing: -.6px; }
.batt { width: 52px; height: 28px; }
.recdot { width: 9px; height: 9px; border-radius: 50%; background: #d08a37; }
.clock { letter-spacing: .15px; font-size: 26px; }

/* window */
.window { flex: 0 0 1988px; display: flex; flex-direction: column; border-radius: 20px; overflow: hidden; background: #fff; box-shadow: 0 10px 40px rgba(0,0,0,.5); }
.titlebar { flex: 0 0 58px; display: grid; grid-template-columns: 1603px 1fr; align-items: center; background: #f5efed; border-top: 2px solid #fff; border-bottom: 2px solid #cecece; }
.lights { display: flex; gap: 16px; padding-left: 16px; }
.lights i { width: 24px; height: 24px; border-radius: 50%; }
.red { background: #ec6a5e; border: 1px solid #d5564a; }
.yellow { background: #f4bf4f; border: 1px solid #dba63a; }
.green { background: #61c554; border: 1px solid #50ad42; }
.title { display: flex; align-items: center; gap: 11px; font: 600 26px/32px Inter, "Liberation Sans", sans-serif; letter-spacing: .2px; color: #444; }
.doc { width: 29px; height: 29px; background: #f7f7f7; box-shadow: 0 1px 2px rgba(0,0,0,.5); }

.toolbar {
  flex: 0 0 78px; display: grid; align-items: center; padding-left: 28px; background: #f5f5f5; color: #666;
  grid-template-columns: 66px 26px 64px 60px 55px 29px 64px 60px 55px 24px 56px 31px 22px 55px 29px 60px 55px 31px 25px 65px 64px 66px 26px 49px 28px 52px 21px 73px 69px 226px 25px 50px 31px 66px 26px 1350px 74px 200px;
}
.toolbar .ic { stroke: currentColor; stroke-width: 2.2; }
.toolbar .dim { color: #b3b3b3; }
.toolbar .ink { color: #2e2e2e; }
.toolbar .bold { stroke: #2e2e2e; stroke-width: 4; }
.caret { width: 12px; height: 10px; color: #555; }
.toolbar .ic[stroke-width="3"] { stroke-width: 3.6; }
.toolbar .ic:first-child { stroke: none; }
.sep { width: 2px; height: 70px; background: #d2d2d2; }
.tbtn { width: 60px; height: 60px; padding: 10px 10px 9px; background: #e5e5e5; }
.tbtn svg { width: 40px; height: 40px; }
.select { width: 195px; height: 46px; display: flex; border: 2px solid #c8c8c8; border-radius: 3px; background: #fff; color: #2e2e2e; font-size: 24px; line-height: 42px; }
.select span { flex: 1; padding-left: 15px; white-space: nowrap; }
.select i { width: 35px; display: flex; align-items: center; justify-content: center; border-left: 2px solid #dedede; }
.showme { display: flex; gap: 9px; align-items: center; color: #111; font-size: 25px; letter-spacing: -.35px; white-space: nowrap; }
.showme svg { width: 34px; height: 32px; }

.work { flex: 0 0 1750px; display: flex; }
.side { flex: 0 0 420px; display: flex; flex-direction: column; background: #fafafa; border-right: 2px solid #cdcdcd; border-top: 2px solid #cdcdcd; letter-spacing: -.15px; }
.tabs { flex: 0 0 56px; display: flex; line-height: 51px; }
.tabs b { flex: 0 0 226px; padding-left: 37px; color: #222; letter-spacing: .1px; }
.tabs span { flex: 1; display: flex; justify-content: space-between; align-items: center; padding: 0 14px 1px 25px; border-left: 2px solid #cdcdcd; border-bottom: 2px solid #cdcdcd; color: #2e2e2e; }
.tabs svg { width: 14px; height: 22px; }
.devices { flex: 0 0 197px; padding: 24px 36px 0; border-bottom: 2px solid #c8c8c8; }
.dev { height: 38px; line-height: 36px; padding-left: 26px; }
.dev.on { background: #e5e5e5; }
.dev.phone { padding-left: 46px; }
.preview { width: 256px; height: 46px; margin: 24px 0 0 44px; border: 2px solid #c8c8c8; border-radius: 3px; background: #fff; text-align: center; line-height: 41px; letter-spacing: .1px; }
.size { flex: 0 0 146px; padding: 16px 36px 0 37px; border-bottom: 2px solid #c8c8c8; }
.auto { display: flex; justify-content: space-between; align-items: center; height: 44px; margin: 13px 0 0 -1px; padding: 0 1px 0 2px; border-bottom: 2px solid #c8c8c8; }
.auto svg { width: 14px; height: 10px; }
.sheets { flex: 1; padding-top: 16px; }
.sheets h2 { padding-left: 37px; }
.sheetrow { display: flex; align-items: center; gap: 14px; height: 40px; margin-top: 23px; padding-left: 39px; background: #f3f3f3; }
.sheetrow svg { width: 34px; height: 34px; }
.objects { flex: 0 0 586px; border-top: 2px solid #c8c8c8; }
.objects h2 { padding: 10px 0 0 24px; height: 52px; }
.objwrap { display: flex; height: 410px; }
ul { flex: 0 0 364px; margin: 0; padding: 13px 0 0 32px; list-style: none; }
li { height: 40px; display: flex; align-items: center; gap: 12px; }
li svg { width: 26px; height: 26px; fill: none; stroke: #666; stroke-width: 2; }
.track { width: 30px; padding: 6px 5px 0 6px; border-left: 2px solid #e4e4e4; border-right: 2px solid #e4e4e4; }
.track i { display: block; width: 16px; height: 282px; border-radius: 8px; background: #c0c0c0; }
.toggle { display: flex; width: 370px; height: 48px; margin: 12px 0 0 24px; border: 2px solid #c8c8c8; border-radius: 3px; background: #fff; line-height: 43px; text-align: center; }
.toggle span { flex: 1; }
.toggle .on { flex: 0 0 186px; margin: -2px 0 -2px -2px; line-height: 47px; background: #666; color: #fff; }
.check { display: flex; align-items: center; gap: 12px; padding: 17px 0 0 36px; line-height: 30px; }
.check i { width: 28px; height: 28px; border: 2px solid #666; border-radius: 2px; background: #fff; }

/* dashboard */
.canvas { flex: 1; padding: 12px 14px 14px 12px; background: #fff; }
.frame { position: relative; width: 3010px; height: 1724px; padding: 0 20px; border: 4px solid #666; border-radius: 3px; font-family: "Open Sans", "Noto Sans", sans-serif; }
.sheet-title { height: 108px; margin-left: -2px; font-size: 39px; line-height: 91px; letter-spacing: .8px; color: #333; }
.treemap { display: flex; width: 2960px; height: 1586px; margin-left: 2px; }
.branch { display: flex; min-width: 0; min-height: 0; }
.tile { min-width: 0; min-height: 0; overflow: hidden; font-size: 25px; line-height: 33px; white-space: nowrap; letter-spacing: -.45px; word-spacing: .6px; }
.labelled { padding: 15px 0 0 14px; }
.on-dark { color: #f6fafc; }
.on-light { color: #0a0a0a; }
.selected { outline: 2px solid #000; position: relative; }
.objbar { position: absolute; left: -4px; top: -4px; width: 40px; height: 126px; background: #666; border-radius: 0 0 5px 0; }
.grip { position: absolute; left: 1450px; top: -2px; width: 100px; height: 24px; display: flex; flex-direction: column; justify-content: center; gap: 5px; padding: 0 14px; background: #666; border-radius: 0 0 4px 4px; }
.grip i { height: 3px; background: #e8e8e8; }
.tooltip {
  position: absolute; left: 1892px; top: 340px; width: 532px; height: 140px; padding: 15px 0 0 14px;
  display: grid; grid-template-columns: 338px 1fr; grid-auto-rows: 36px; align-items: center;
  background: #fff; border: 2px solid #cfcfcf; box-shadow: 4px 5px 5px rgba(0,0,0,.4);
  font-size: 26px; white-space: nowrap; color: #787878; letter-spacing: .2px;
}
.tooltip b { font-weight: 600; color: #333; letter-spacing: -.3px; }

/* bottom bars */
.sheettabs { flex: 0 0 62px; display: flex; border-top: 2px solid #cdcdcd; border-bottom: 2px solid #c8c8c8; background: #e5e5e5; color: #666; line-height: 56px; }
.sheettabs span { display: flex; align-items: center; border-right: 2px solid #c6c6c6; }
.sheettabs svg { fill: none; stroke: #666; stroke-width: 2; }
.source { width: 262px; padding-left: 19px; gap: 12px; letter-spacing: -.2px; }
.source svg { width: 18px; height: 26px; }
.active { width: 209px; padding-left: 16px; gap: 9px; background: #fafafa; font-weight: 700; color: #555; letter-spacing: .15px; }
.active svg { width: 24px; height: 24px; }
.plain { width: 115px; padding-left: 11px; letter-spacing: .15px; }
.add { width: 64px; justify-content: center; }
.add svg { width: 30px; height: 30px; }
.status { flex: 0 0 40px; display: flex; align-items: center; gap: 32px; padding-left: 24px; background: linear-gradient(90deg, #ececec 0, #e6e6e6 480px, #d6d6d6 900px, #d3d3d3 2700px, #e6e6e6 3100px, #ececec 3300px); color: #000; font-size: 21.300px; line-height: 38px; letter-spacing: -.1px; white-space: nowrap; }
.cells { margin-left: auto; display: grid; grid-template-columns: 255px 54px 54px 93px 142px 154px; height: 40px; }
.cells > * { border-left: 2px solid #bebebe; display: flex; align-items: center; }
.cells i { height: 40px; }
.nav { padding-left: 16px; }
.nav svg { width: 112px; height: 16px; }
.views { padding-left: 17px; }
.views svg { width: 108px; height: 24px; }

/* dock */
.dock {
  width: 2584px; height: 158px; margin: 2px 0 0 436px; padding: 0 4px; display: flex; position: relative;
  border: 2px solid rgba(255,255,255,.22); border-radius: 46px;
  background: linear-gradient(90deg, #5b6070 0, #62606f 170px, #7c5a68 330px, #8c5874 600px, #8d5872 740px, #9a5a66 900px, #a05c5f 1030px, #9c5a64 1160px, #845867 1330px, #8a5a6d 1600px, #9a5c84 1920px, #8a5a77 2080px, #9b5873 2230px, #a35e64 2400px, #ad6062 100%);
}
.app { flex: 0 0 136px; position: relative; display: flex; justify-content: center; align-items: flex-start; padding-top: 20px; }
.run::after { content: ""; position: absolute; bottom: 2px; width: 8px; height: 8px; border-radius: 50%; background: #120308; }
.app-ic { width: 103px; height: 103px; filter: drop-shadow(0 2px 2px rgba(0,0,0,.3)); }
.app-ic.tall { width: 111px; height: 111px; margin-left: 8px; }
.app-ic.square { width: 110px; height: 110px; margin-top: -3px; background: #f6f6f7; }
.petals rect { mix-blend-mode: multiply; }
.cal { width: 103px; height: 103px; border-radius: 24px; text-align: center; font-family: Inter, "Liberation Sans", sans-serif; background: #f8f8f7; }
.cal span { display: block; height: 32px; border-radius: 24px 24px 0 0; background: #e25f50; color: #fff; font-size: 21px; line-height: 36px; font-weight: 600; letter-spacing: -1px; }
.cal b { display: block; font-size: 65px; line-height: 68px; font-weight: 300; color: #222; }
.term { width: 103px; height: 103px; padding: 6px 9px; border-radius: 24px; border: 4px solid #000; outline: 1px solid #b8c4ca; background: #242424; box-shadow: inset 0 0 0 6px #000; color: #fff; font-family: "Liberation Mono", monospace; }
.term b { font-size: 26px; line-height: 34px; letter-spacing: -1px; }
.split { flex: 0 0 62px; }
.split::before { content: ""; display: block; width: 2px; height: 118px; margin: 18px 0 0 32px; background: #59294a; }
.share { width: 116px; height: 13px; margin-top: 45px; display: flex; align-items: center; gap: 3px; padding-left: 6px; background: #f6f3f4; font-size: 3.700px; color: #333; white-space: nowrap; }
.share span { width: 64px; }
.share b { padding: 0 3px; background: #3e6fd9; color: #fff; line-height: 9px; font-size: 4px; }
.share em { color: #3e6fd9; }
.badge { position: absolute; left: 87px; top: 91px; width: 38px; height: 38px; }
.files { width: 120px; height: 58px; margin-top: 23px; }
.trash { width: 94px; height: 114px; margin-top: -4px; }
```
